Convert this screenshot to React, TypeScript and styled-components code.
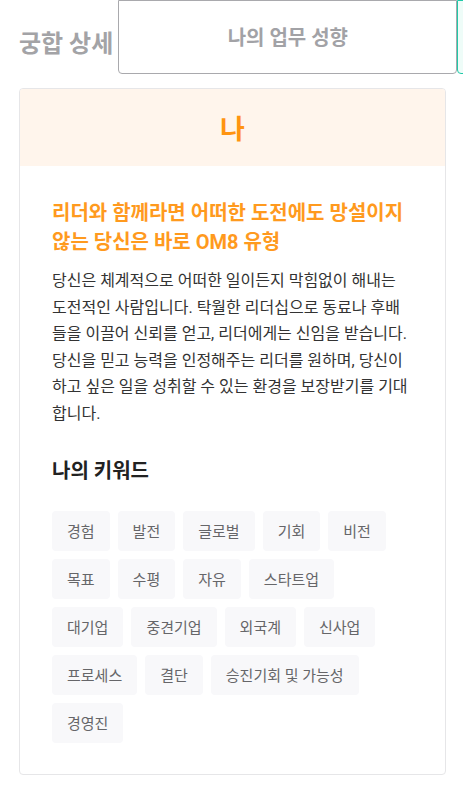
import React from "react";
import styled, { createGlobalStyle } from "styled-components";

const Global = createGlobalStyle`
  html, body { margin: 0; padding: 0; background: #fff; }
  body { font-family: Roboto, "Noto Sans CJK KR", sans-serif; }
  * { box-sizing: border-box; }
`;

const Page = styled.div`
  width: 463px;
  overflow: hidden;
`;

const Header = styled.div`
  display: flex;
  align-items: center;
  height: 74px;
  padding-left: 19px;
`;

const Title = styled.h1`
  margin: 0;
  padding-top: 14px;
  flex: none;
  font-size: 24px;
  line-height: 32px;
  font-weight: 700;
  color: #a3a3a6;
  white-space: nowrap;
`;

const Tabs = styled.div`
  display: flex;
  margin-left: 5px;
  align-self: stretch;
  flex: none;
`;

const Tab = styled.div<{ $active?: boolean; $width: number }>`
  flex: none;
  width: ${(p) => p.$width}px;
  height: 74px;
  display: flex;
  align-items: center;
  justify-content: center;
  border: 1px solid ${(p) => (p.$active ? "#20c9a8" : "#a9a9ad")};
  border-radius: 0 0 4px 4px;
  background: ${(p) => (p.$active ? "#eefcf8" : "#fff")};
  font-size: 20px;
  font-weight: 700;
  color: #a2a2a6;
  padding-bottom: 2px;
`;

const Card = styled.section`
  margin: 14px 17px 24px 19px;
  border: 1px solid #e6e6e8;
  border-radius: 4px;
  overflow: hidden;
`;

const CardHead = styled.div`
  height: 77px;
  background: #fff5ec;
  display: flex;
  align-items: center;
  justify-content: center;
  font-size: 27px;
  font-weight: 700;
  color: #ff9410;
`;

const Body = styled.div`
  padding: 33px 32px 31px 32px;
`;

const Headline = styled.h2`
  margin: 0;
  font-size: 20px;
  line-height: 29px;
  font-weight: 700;
  color: #ff9a1e;
  word-break: keep-all;
`;

const Desc = styled.p`
  margin: 11px 0 0;
  font-size: 16px;
  line-height: 26.6px;
  color: #333;
  word-break: break-all;
`;

const SubTitle = styled.h3`
  margin: 30px 0 0;
  font-size: 20px;
  line-height: 26px;
  font-weight: 700;
  color: #222;
`;

const TagList = styled.div`
  display: flex;
  flex-wrap: wrap;
  gap: 8px;
  margin-top: 27px;
`;

const Tag = styled.span`
  display: inline-flex;
  align-items: center;
  height: 40px;
  padding: 0 15px;
  border-radius: 4px;
  background: #f8f8fa;
  font-size: 15px;
  color: #666669;
  white-space: nowrap;
`;

const keywords = [
  "경험", "발전", "글로벌", "기회", "비전",
  "목표", "수평", "자유", "스타트업",
  "대기업", "중견기업", "외국계", "신사업",
  "프로세스", "결단", "승진기회 및 가능성",
  "경영진",
];

export default function App() {
  return (
    <Page>
      <Global />
      <Header>
        <Title>궁합 상세</Title>
        <Tabs>
          <Tab $width={339}>나의 업무 성향</Tab>
          <Tab $active $width={339}>상대 업무 성향</Tab>
        </Tabs>
      </Header>
      <Card>
        <CardHead>나</CardHead>
        <Body>
          <Headline>
            리더와 함께라면 어떠한 도전에도 망설이지 않는 당신은 바로 OM8 유형
          </Headline>
          <Desc>
            당신은 체계적으로 어떠한 일이든지 막힘없이 해내는 도전적인 사람입니다. 탁월한 리더십으로 동료나 후배들을 이끌어 신뢰를 얻고, 리더에게는 신임을 받습니다. 당신을 믿고 능력을 인정해주는 리더를 원하며, 당신이 하고 싶은 일을 성취할 수 있는 환경을 보장받기를 기대합니다.
          </Desc>
          <SubTitle>나의 키워드</SubTitle>
          <TagList>
            {keywords.map((k) => (
              <Tag key={k}>{k}</Tag>
            ))}
          </TagList>
        </Body>
      </Card>
    </Page>
  );
}
